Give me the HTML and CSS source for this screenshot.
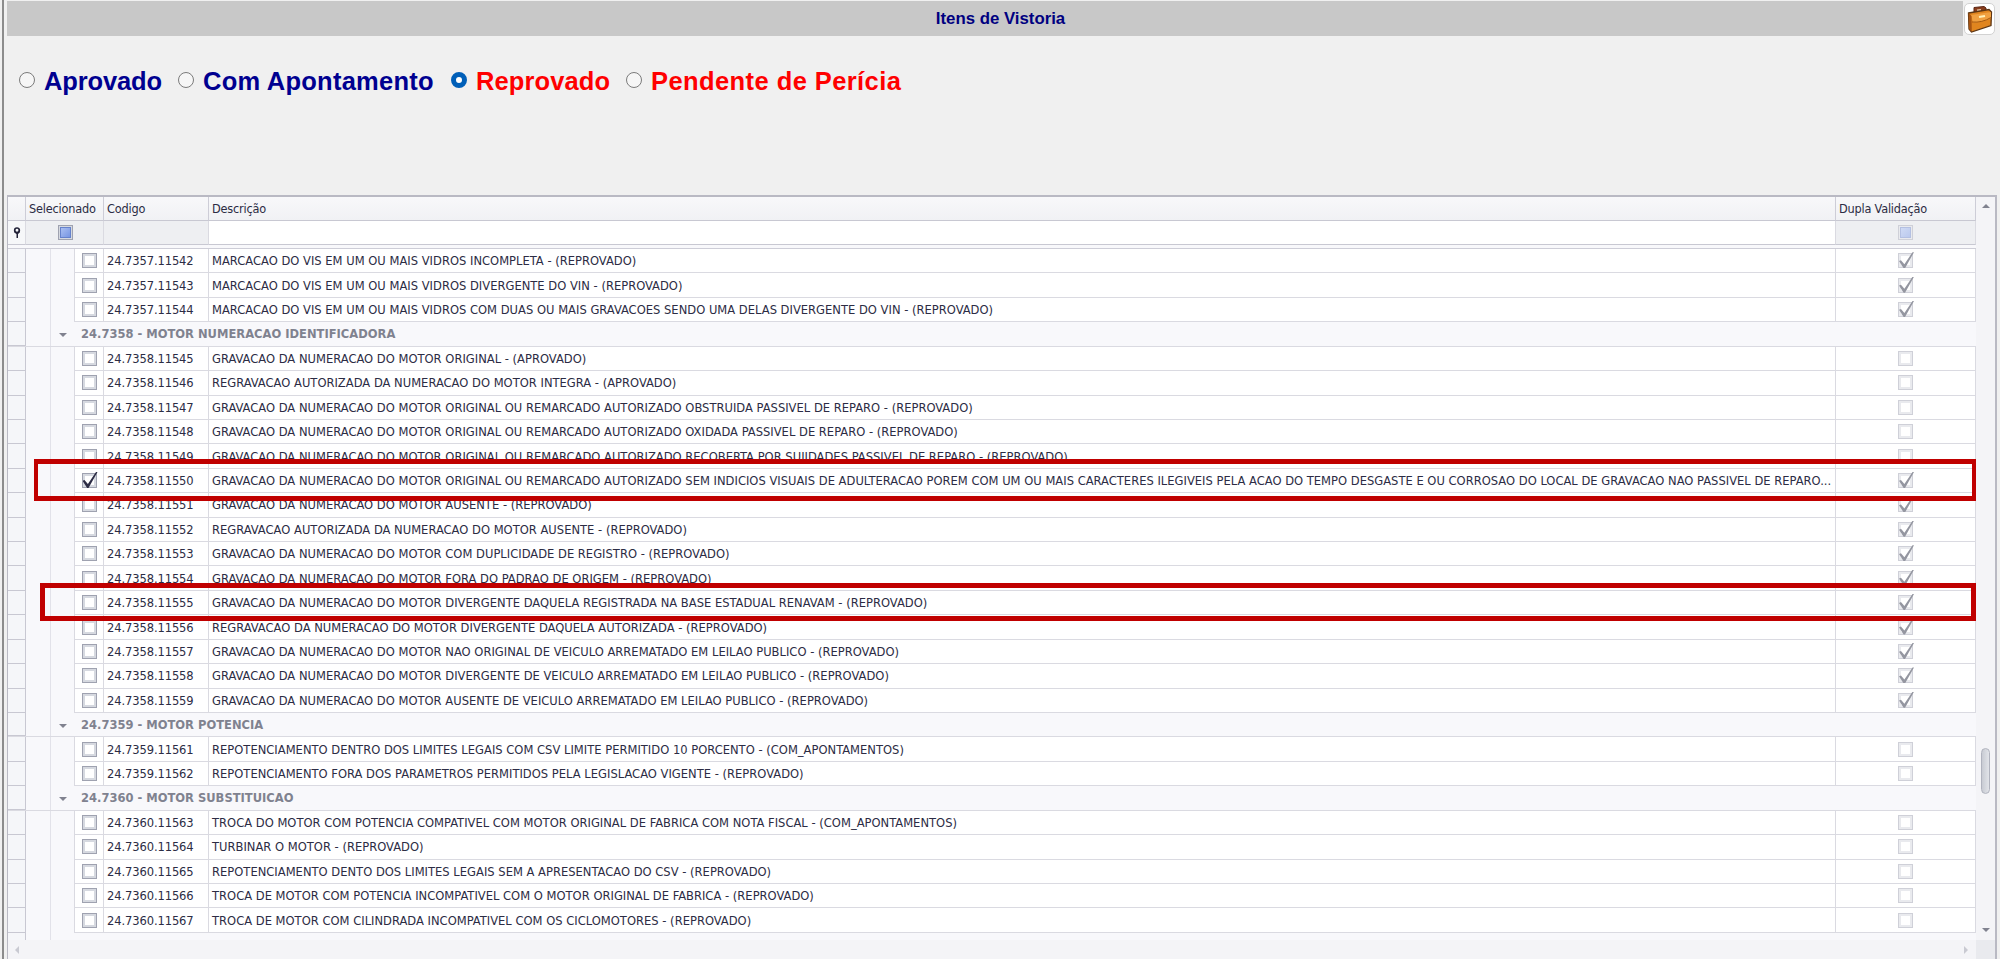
FILE: index.html
```html
<!DOCTYPE html>
<html lang="pt-BR">
<head>
    <meta charset="UTF-8">
    <title>Itens de Vistoria</title>
    <link rel="stylesheet" href="styles.css">
</head>
<body>
<div class="window">
    <header class="titlebar">
        <h1>Itens de Vistoria</h1>
        <button type="button" class="case-button">
            <svg width="26" height="28" viewBox="0 0 26 28">
                <path d="M7 7V2.500L17 1.500 19 3V7" fill="#8a3d1c" stroke="#5a2412"/>
                <path d="M10 5.500l4-.5" stroke="#e9c9a8" stroke-width="2"/>
                <path d="M1.500 8L22 4.500 24.500 7 24 20.500 4.500 27 2 24z" fill="#e0851f" stroke="#5d3614" stroke-width="1.300"/>
                <path d="M4 10L24 7v6q-9 5-18 4.500z" fill="#f0a040"/>
                <path d="M5 17q10 1 19-4.500" fill="none" stroke="#a3570f"/>
                <path d="M1.500 8l3 3 .3 16L2 24z" fill="#a65412"/>
                <path d="M12 12l6-1" stroke="#fff0b8" stroke-width="2"/>
            </svg>
        </button>
    </header>

    <div class="options">
        <label class="blue"><span class="radio"></span>Aprovado</label>
        <label class="blue"><span class="radio"></span>Com Apontamento</label>
        <label class="red"><span class="radio checked"></span>Reprovado</label>
        <label class="red"><span class="radio"></span>Pendente de Perícia</label>
    </div>

    <div class="table">
        <div class="main">
            <div class="head">
                <span></span><span>Selecionado</span><span>Codigo</span><span>Descrição</span><span>Dupla Validação</span>
            </div>
            <div class="filter">
                <span><svg width="8" height="11" viewBox="0 0 8 11"><circle cx="4" cy="3.300" r="2.300" fill="none" stroke="#222238" stroke-width="1.700"/><path d="M1 5h6L5 7v4H3.500V7z" fill="#222238"/></svg></span>
                <span><b class="cb mixed"></b></span><span></span><span></span><span><b class="cb mixed off"></b></span>
            </div>
            <div class="rows">
                <div class="row"><i></i><i></i><i></i><span><b class="cb"></b></span><span class="code">24.7357.11542</span><span class="desc">MARCACAO DO VIS EM UM OU MAIS VIDROS INCOMPLETA - (REPROVADO)</span><span><b class="cb off on"></b></span></div>
                <div class="row"><i></i><i></i><i></i><span><b class="cb"></b></span><span class="code">24.7357.11543</span><span class="desc">MARCACAO DO VIS EM UM OU MAIS VIDROS DIVERGENTE DO VIN - (REPROVADO)</span><span><b class="cb off on"></b></span></div>
                <div class="row"><i></i><i></i><i></i><span><b class="cb"></b></span><span class="code">24.7357.11544</span><span class="desc">MARCACAO DO VIS EM UM OU MAIS VIDROS COM DUAS OU MAIS GRAVACOES SENDO UMA DELAS DIVERGENTE DO VIN - (REPROVADO)</span><span><b class="cb off on"></b></span></div>
                <div class="group"><i></i><i></i><em></em><strong>24.7358 - MOTOR NUMERACAO IDENTIFICADORA</strong></div>
                <div class="row"><i></i><i></i><i></i><span><b class="cb"></b></span><span class="code">24.7358.11545</span><span class="desc">GRAVACAO DA NUMERACAO DO MOTOR ORIGINAL - (APROVADO)</span><span><b class="cb off"></b></span></div>
                <div class="row"><i></i><i></i><i></i><span><b class="cb"></b></span><span class="code">24.7358.11546</span><span class="desc">REGRAVACAO AUTORIZADA DA NUMERACAO DO MOTOR INTEGRA - (APROVADO)</span><span><b class="cb off"></b></span></div>
                <div class="row"><i></i><i></i><i></i><span><b class="cb"></b></span><span class="code">24.7358.11547</span><span class="desc">GRAVACAO DA NUMERACAO DO MOTOR ORIGINAL OU REMARCADO AUTORIZADO OBSTRUIDA PASSIVEL DE REPARO - (REPROVADO)</span><span><b class="cb off"></b></span></div>
                <div class="row"><i></i><i></i><i></i><span><b class="cb"></b></span><span class="code">24.7358.11548</span><span class="desc">GRAVACAO DA NUMERACAO DO MOTOR ORIGINAL OU REMARCADO AUTORIZADO OXIDADA PASSIVEL DE REPARO - (REPROVADO)</span><span><b class="cb off"></b></span></div>
                <div class="row"><i></i><i></i><i></i><span><b class="cb"></b></span><span class="code">24.7358.11549</span><span class="desc">GRAVACAO DA NUMERACAO DO MOTOR ORIGINAL OU REMARCADO AUTORIZADO RECOBERTA POR SUJIDADES PASSIVEL DE REPARO - (REPROVADO)</span><span><b class="cb off"></b></span></div>
                <div class="row"><i></i><i></i><i></i><span><b class="cb on"></b></span><span class="code">24.7358.11550</span><span class="desc">GRAVACAO DA NUMERACAO DO MOTOR ORIGINAL OU REMARCADO AUTORIZADO SEM INDICIOS VISUAIS DE ADULTERACAO POREM COM UM OU MAIS CARACTERES ILEGIVEIS PELA ACAO DO TEMPO DESGASTE E OU CORROSAO DO LOCAL DE GRAVACAO NAO PASSIVEL DE REPARO...</span><span><b class="cb off on"></b></span></div>
                <div class="row"><i></i><i></i><i></i><span><b class="cb"></b></span><span class="code">24.7358.11551</span><span class="desc">GRAVACAO DA NUMERACAO DO MOTOR AUSENTE - (REPROVADO)</span><span><b class="cb off on"></b></span></div>
                <div class="row"><i></i><i></i><i></i><span><b class="cb"></b></span><span class="code">24.7358.11552</span><span class="desc">REGRAVACAO AUTORIZADA DA NUMERACAO DO MOTOR AUSENTE - (REPROVADO)</span><span><b class="cb off on"></b></span></div>
                <div class="row"><i></i><i></i><i></i><span><b class="cb"></b></span><span class="code">24.7358.11553</span><span class="desc">GRAVACAO DA NUMERACAO DO MOTOR COM DUPLICIDADE DE REGISTRO - (REPROVADO)</span><span><b class="cb off on"></b></span></div>
                <div class="row"><i></i><i></i><i></i><span><b class="cb"></b></span><span class="code">24.7358.11554</span><span class="desc">GRAVACAO DA NUMERACAO DO MOTOR FORA DO PADRAO DE ORIGEM - (REPROVADO)</span><span><b class="cb off on"></b></span></div>
                <div class="row"><i></i><i></i><i></i><span><b class="cb"></b></span><span class="code">24.7358.11555</span><span class="desc">GRAVACAO DA NUMERACAO DO MOTOR DIVERGENTE DAQUELA REGISTRADA NA BASE ESTADUAL RENAVAM - (REPROVADO)</span><span><b class="cb off on"></b></span></div>
                <div class="row"><i></i><i></i><i></i><span><b class="cb"></b></span><span class="code">24.7358.11556</span><span class="desc">REGRAVACAO DA NUMERACAO DO MOTOR DIVERGENTE DAQUELA AUTORIZADA - (REPROVADO)</span><span><b class="cb off on"></b></span></div>
                <div class="row"><i></i><i></i><i></i><span><b class="cb"></b></span><span class="code">24.7358.11557</span><span class="desc">GRAVACAO DA NUMERACAO DO MOTOR NAO ORIGINAL DE VEICULO ARREMATADO EM LEILAO PUBLICO - (REPROVADO)</span><span><b class="cb off on"></b></span></div>
                <div class="row"><i></i><i></i><i></i><span><b class="cb"></b></span><span class="code">24.7358.11558</span><span class="desc">GRAVACAO DA NUMERACAO DO MOTOR DIVERGENTE DE VEICULO ARREMATADO EM LEILAO PUBLICO - (REPROVADO)</span><span><b class="cb off on"></b></span></div>
                <div class="row"><i></i><i></i><i></i><span><b class="cb"></b></span><span class="code">24.7358.11559</span><span class="desc">GRAVACAO DA NUMERACAO DO MOTOR AUSENTE DE VEICULO ARREMATADO EM LEILAO PUBLICO - (REPROVADO)</span><span><b class="cb off on"></b></span></div>
                <div class="group"><i></i><i></i><em></em><strong>24.7359 - MOTOR POTENCIA</strong></div>
                <div class="row"><i></i><i></i><i></i><span><b class="cb"></b></span><span class="code">24.7359.11561</span><span class="desc">REPOTENCIAMENTO DENTRO DOS LIMITES LEGAIS COM CSV LIMITE PERMITIDO 10 PORCENTO - (COM_APONTAMENTOS)</span><span><b class="cb off"></b></span></div>
                <div class="row"><i></i><i></i><i></i><span><b class="cb"></b></span><span class="code">24.7359.11562</span><span class="desc">REPOTENCIAMENTO FORA DOS PARAMETROS PERMITIDOS PELA LEGISLACAO VIGENTE - (REPROVADO)</span><span><b class="cb off"></b></span></div>
                <div class="group"><i></i><i></i><em></em><strong>24.7360 - MOTOR SUBSTITUICAO</strong></div>
                <div class="row"><i></i><i></i><i></i><span><b class="cb"></b></span><span class="code">24.7360.11563</span><span class="desc">TROCA DO MOTOR COM POTENCIA COMPATIVEL COM MOTOR ORIGINAL DE FABRICA COM NOTA FISCAL - (COM_APONTAMENTOS)</span><span><b class="cb off"></b></span></div>
                <div class="row"><i></i><i></i><i></i><span><b class="cb"></b></span><span class="code">24.7360.11564</span><span class="desc">TURBINAR O MOTOR - (REPROVADO)</span><span><b class="cb off"></b></span></div>
                <div class="row"><i></i><i></i><i></i><span><b class="cb"></b></span><span class="code">24.7360.11565</span><span class="desc">REPOTENCIAMENTO DENTO DOS LIMITES LEGAIS SEM A APRESENTACAO DO CSV - (REPROVADO)</span><span><b class="cb off"></b></span></div>
                <div class="row"><i></i><i></i><i></i><span><b class="cb"></b></span><span class="code">24.7360.11566</span><span class="desc">TROCA DE MOTOR COM POTENCIA INCOMPATIVEL COM O MOTOR ORIGINAL DE FABRICA - (REPROVADO)</span><span><b class="cb off"></b></span></div>
                <div class="row"><i></i><i></i><i></i><span><b class="cb"></b></span><span class="code">24.7360.11567</span><span class="desc">TROCA DE MOTOR COM CILINDRADA INCOMPATIVEL COM OS CICLOMOTORES - (REPROVADO)</span><span><b class="cb off"></b></span></div>
                <div class="group last"><i></i><i></i></div>
            </div>
            <div class="hscroll"><span class="arrow left"></span><span class="arrow right"></span></div>
        </div>
        <div class="vscroll">
            <span class="arrow up"></span>
            <span class="thumb"></span>
            <span class="arrow down"></span>
            <span class="corner"></span>
        </div>
    </div>
    <div class="mark first"></div>
    <div class="mark second"></div>
</div>
</body>
</html>
```
FILE: styles.css
```css
* {
    box-sizing: border-box;
}

body {
    margin: 0;
    background-color: #f0f0f0;
    font-family: "DejaVu Sans Condensed", "DejaVu Sans", sans-serif;
    font-stretch: condensed;
    font-size: 12.8px;
    color: #2c2c44;
}

.window {
    position: relative;
    width: 2000px;
    height: 959px;
    overflow: hidden;
    padding: 1px 3px 0 5px;
    border-left: 2px solid #f0f0f0;
    box-shadow: inset 2px 0 0 #8c8c8c;
}

.titlebar {
    display: flex;
    gap: 1px;
    height: 35px;
}

h1 {
    width: 1956px;
    margin: 0;
    padding-left: 31px;
    background-color: #c8c8c8;
    color: #000080;
    font: bold 16.8px/36px "Liberation Sans", Arial, sans-serif;
    text-align: center;
}

.case-button {
    width: 31px;
    height: 32px;
    margin-top: 2px;
    padding: 1px;
    border: 1px solid #d2d2d2;
    border-radius: 5px;
    background-color: #fff;
}

.options {
    display: flex;
    height: 159px;
    padding: 29px 0 0 12px;
    font: bold 25.5px/32px "Liberation Sans", Arial, sans-serif;
}

.options label {
    display: flex;
    height: 32px;
    white-space: nowrap;
}

.options label:nth-child(1) {
    width: 159px;
    letter-spacing: -0.15px;
}

.options label:nth-child(2) {
    width: 273px;
    letter-spacing: 0.25px;
}

.options label:nth-child(3) {
    width: 175px;
    letter-spacing: 0.1px;
}

.options label:nth-child(4) {
    letter-spacing: 0.42px;
}

.blue { color: #000090; }
.red { color: #ff0000; }

.radio {
    width: 16px;
    height: 16px;
    margin: 7px 9px 0 0;
    border: 1px solid #7b7b7b;
    border-radius: 50%;
    background-color: #f6f6f6;
}

.radio.checked {
    border: 5px solid #005fb8;
    background-color: #fff;
}

.table {
    display: flex;
    width: 1990px;
    height: 764px;
    border: solid #b9b9c3;
    border-width: 2px 2px 0 1px;
    background-color: #f8f8fb;
}

.main {
    width: 1968px;
}

.head,
.filter {
    display: grid;
    grid-template-columns: 18px 78px 105px 1627px 140px;
}

.head {
    height: 24px;
    background: linear-gradient(#f8f8fa, #f0f1f4);
    line-height: 23px;
    font-size: 12.6px;
    letter-spacing: -0.2px;
}

.head span {
    padding-left: 3px;
    border-right: 1px solid #cdcdd7;
    border-bottom: 1px solid #c8c8d2;
}

.filter {
    height: 28px;
    padding-bottom: 3px;
    border-bottom: 1px solid #cdcdd7;
}

.filter span,
.row span {
    display: flex;
    align-items: center;
    justify-content: center;
    border-right: 1px solid #dadae1;
    border-bottom: 1px solid #dadae1;
}

.filter span {
    background-color: #eeeff2;
    border-bottom-color: #c8c8d2;
}

.filter span:first-child {
    background-color: #f6f7f9;
}

.filter span:nth-child(2) {
    padding-left: 1px;
}

.filter span:nth-child(4) {
    background-color: #fff;
}

.rows {
    height: 691px;
    overflow: hidden;
}

.row,
.group {
    display: grid;
    grid-template-columns: 18px 25px 24px 29px 105px 1627px 140px;
    height: 24.43px;
}

.row i,
.group i {
    border-right: 1px solid #e2e2e9;
}

.row i:first-child,
.group i:first-child {
    background-color: #f5f6f9;
    border-right-color: #c8c8d2;
    border-bottom: 1px solid #c8c8d2;
}

.row i:nth-child(3) {
    border-right-color: #dadae1;
}

.row span {
    background-color: #fff;
}

.row .code,
.row .desc {
    justify-content: flex-start;
    padding-left: 3px;
    white-space: nowrap;
}

.row .code {
    letter-spacing: -0.1px;
}

.row .desc {
    letter-spacing: 0.015px;
}

.group {
    border-bottom: 1px solid #dadae1;
}

.group strong {
    grid-column: 4 / -1;
    padding-left: 6px;
    color: #80828f;
    line-height: 23px;
}

.group em {
    width: 0;
    margin: 11px 0 0 8px;
    border: 4px solid transparent;
    border-top-color: #80828f;
    border-bottom: 0;
}

.group.last {
    border-bottom: 0;
}

/* check boxes */
.cb {
    position: relative;
    width: 15px;
    height: 15px;
    border: 1px solid #9fa2b0;
    background-color: #fff;
    box-shadow: inset 0 0 0 2px #d6d9e0;
}

.cb.off {
    border-color: #cfd0d8;
    box-shadow: inset 0 0 0 2px #e9eaee;
}

.cb.mixed {
    background: linear-gradient(135deg, #b5c8f5, #6c8ce0);
    box-shadow: inset 0 0 0 1px #d6d9e0, inset 0 0 0 2px #6682cc;
}

.cb.mixed.off {
    background: linear-gradient(135deg, #d4def6, #b6c5ec);
    box-shadow: inset 0 0 0 1px #e9eaee, inset 0 0 0 2px #b4c0e2;
}

.cb.on::after {
    content: "";
    position: absolute;
    left: 0;
    top: -2px;
    width: 15px;
    height: 16px;
    background-color: #2c2c44;
    clip-path: polygon(0 55%, 13% 50%, 36% 75%, 90% 0, 100% 0, 40% 100%, 31% 100%);
}

.cb.off.on::after {
    background-color: #9496a0;
}

/* scroll bars */
.hscroll {
    display: flex;
    justify-content: space-between;
    height: 19px;
    padding: 6px 8px 0 7px;
    background-color: #f4f4f7;
}

.vscroll {
    display: flex;
    flex-direction: column;
    align-items: center;
    width: 19px;
    background-color: #f4f4f7;
}

.arrow {
    width: 0;
    height: 0;
    border: 4px solid transparent;
}

.left {
    border-right-color: #c9cad2;
    border-left: 0;
}

.right {
    border-left-color: #c9cad2;
    border-right: 0;
}

.up {
    margin-top: 7px;
    border-bottom-color: #80828f;
    border-top: 0;
}

.down {
    margin-top: 134px;
    border-top-color: #80828f;
    border-bottom: 0;
}

.thumb {
    width: 9px;
    height: 46px;
    margin-top: 540px;
    border: 1px solid #b0b3be;
    border-radius: 5px;
    background: linear-gradient(90deg, #c8cbd3, #e2e4e9);
}

.corner {
    width: 19px;
    height: 19px;
    margin-top: 8px;
    background-color: #e9eaee;
}

/* highlighted rows */
.mark {
    position: absolute;
    border: 5px solid #c00000;
}

.mark.first {
    left: 32px;
    top: 459px;
    width: 1942px;
    height: 42px;
    border-width: 5px 4px;
}

.mark.second {
    left: 38px;
    top: 583px;
    width: 1936px;
    height: 38px;
}
```
